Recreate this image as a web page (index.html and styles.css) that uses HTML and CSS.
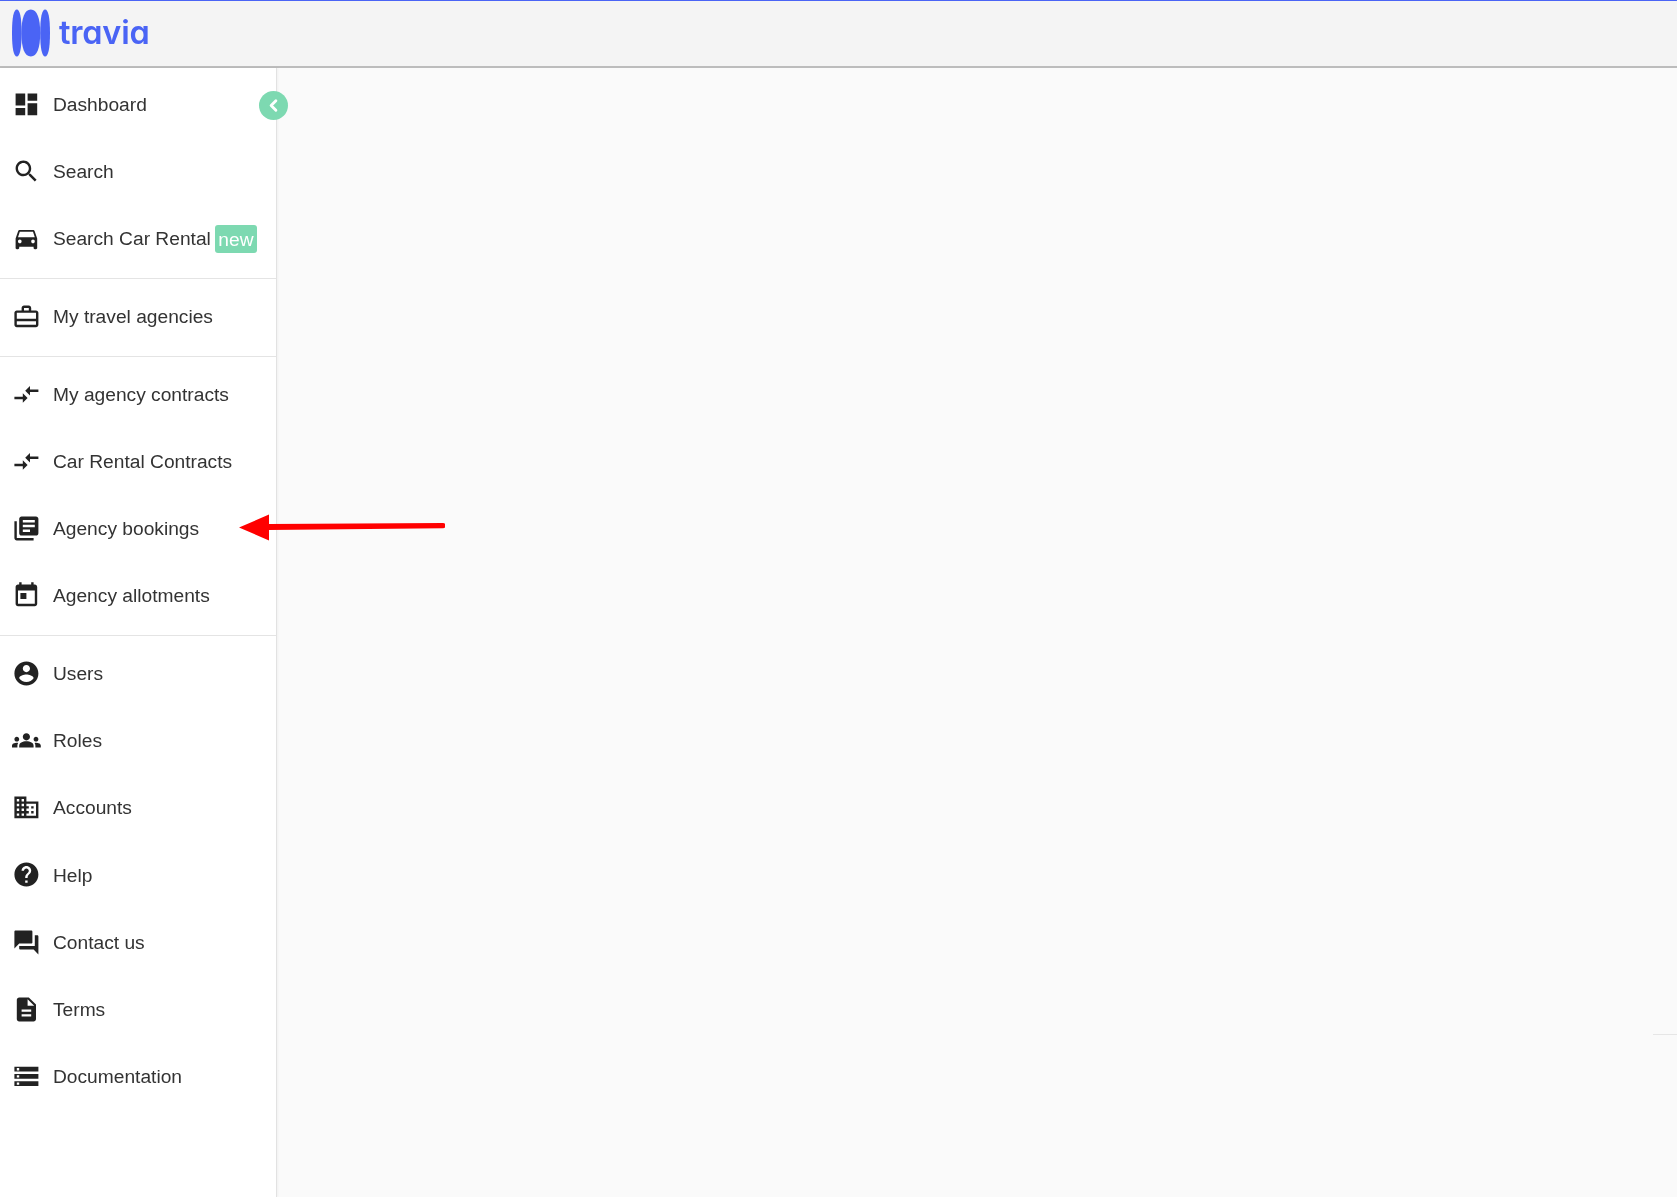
FILE: index.html
```html
<!DOCTYPE html>
<html lang="en">
<head>
<meta charset="utf-8">
<title>travia</title>
<link rel="stylesheet" href="styles.css">
</head>
<body>
<header class="topbar">
  <div class="logo">
    <svg class="logo-mark" viewBox="0 0 38 48" aria-hidden="true">
      <path d="M4.8 .5C7.8 .5 9.6 8 9.6 24S7.8 47.5 4.8 47.5 0 40 0 24 1.8 .5 4.8 .5z"/>
      <path d="M18.8 .5C25 .5 28.2 9 28.2 24S25 47.5 18.8 47.5 9.4 39 9.4 24 12.6 .5 18.8 .5z"/>
      <path d="M33.1 .5C36.1 .5 38 8 38 24S36.1 47.5 33.1 47.5 28.2 40 28.2 24 30.1 .5 33.1 .5z"/>
    </svg>
    <span class="logo-text">travia</span>
  </div>
</header>
<div class="shell">
  <nav class="sidebar">
    <div class="group">
      <a class="item"><svg class="icon" viewBox="0 0 24 24"><path d="M3 13h8V3H3v10zm0 8h8v-6H3v6zm10 0h8V11h-8v10zm0-18v6h8V3h-8z"/></svg><span>Dashboard</span></a>
      <a class="item"><svg class="icon" viewBox="0 0 24 24"><path d="M15.5 14h-.79l-.28-.27C15.41 12.59 16 11.11 16 9.5 16 5.91 13.09 3 9.5 3S3 5.91 3 9.5 5.91 16 9.5 16c1.61 0 3.09-.59 4.23-1.57l.27.28v.79l5 4.99L20.49 19l-4.99-5zm-6 0C7.01 14 5 11.99 5 9.5S7.01 5 9.5 5 14 7.01 14 9.5 11.99 14 9.5 14z"/></svg><span>Search</span></a>
      <a class="item"><svg class="icon" viewBox="0 0 24 24"><path d="M18.92 6.01C18.72 5.42 18.16 5 17.5 5h-11c-.66 0-1.21.42-1.42 1.01L3 12v8c0 .55.45 1 1 1h1c.55 0 1-.45 1-1v-1h12v1c0 .55.45 1 1 1h1c.55 0 1-.45 1-1v-8l-2.08-5.99zM6.5 16c-.83 0-1.5-.67-1.5-1.5S5.67 13 6.5 13s1.5.67 1.5 1.5S7.33 16 6.5 16zm11 0c-.83 0-1.5-.67-1.5-1.5s.67-1.5 1.5-1.5 1.5.67 1.5 1.5-.67 1.5-1.5 1.5zM5 11l1.5-4.5h11L19 11H5z"/></svg><span>Search Car Rental</span><span class="badge">new</span></a>
    </div>
    <div class="group">
      <a class="item"><svg class="icon" viewBox="0 0 24 24"><path d="M20 7h-4V5c0-1.1-.9-2-2-2h-4c-1.1 0-2 .9-2 2v2H4c-1.1 0-2 .9-2 2v10c0 1.1.9 2 2 2h16c1.1 0 2-.9 2-2V9c0-1.1-.9-2-2-2zM10 5h4v2h-4V5zm10 14H4v-3h16v3zm0-5H4V9h16v5z"/></svg><span>My travel agencies</span></a>
    </div>
    <div class="group">
      <a class="item"><svg class="icon" viewBox="0 0 24 24"><path d="M9.01 14H2v2h7.01v3L13 15l-3.99-4v3zm5.98-1v-3H22V8h-7.01V5L11 9l3.99 4z"/></svg><span>My agency contracts</span></a>
      <a class="item"><svg class="icon" viewBox="0 0 24 24"><path d="M9.01 14H2v2h7.01v3L13 15l-3.99-4v3zm5.98-1v-3H22V8h-7.01V5L11 9l3.99 4z"/></svg><span>Car Rental Contracts</span></a>
      <a class="item"><svg class="icon" viewBox="0 0 24 24"><path d="M4 6H2v14c0 1.1.9 2 2 2h14v-2H4V6zm16-4H8c-1.1 0-2 .9-2 2v12c0 1.1.9 2 2 2h12c1.1 0 2-.9 2-2V4c0-1.1-.9-2-2-2zm-1 9H9V9h10v2zm-4 4H9v-2h6v2zm4-8H9V5h10v2z"/></svg><span>Agency bookings</span></a>
      <a class="item"><svg class="icon" viewBox="0 0 24 24"><path d="M19 3h-1V1h-2v2H8V1H6v2H5c-1.11 0-2 .9-2 2v14c0 1.1.89 2 2 2h14c1.1 0 2-.9 2-2V5c0-1.1-.9-2-2-2zm0 16H5V8h14v11zM7 10h5v5H7z"/></svg><span>Agency allotments</span></a>
    </div>
    <div class="group last">
      <a class="item"><svg class="icon" viewBox="0 0 24 24"><path d="M12 2C6.48 2 2 6.48 2 12s4.48 10 10 10 10-4.48 10-10S17.52 2 12 2zm0 3c1.66 0 3 1.34 3 3s-1.34 3-3 3-3-1.34-3-3 1.34-3 3-3zm0 14.2c-2.5 0-4.71-1.28-6-3.22.03-1.99 4-3.08 6-3.08 1.99 0 5.97 1.09 6 3.08-1.29 1.94-3.5 3.22-6 3.22z"/></svg><span>Users</span></a>
      <a class="item"><svg class="icon" viewBox="0 0 24 24"><path d="M12 12.75c1.63 0 3.07.39 4.24.9 1.08.48 1.76 1.56 1.76 2.73V18H6v-1.61c0-1.18.68-2.26 1.76-2.73 1.17-.52 2.61-.91 4.24-.91zM4 13c1.1 0 2-.9 2-2s-.9-2-2-2-2 .9-2 2 .9 2 2 2zm1.13 1.1c-.37-.06-.74-.1-1.13-.1-.99 0-1.93.21-2.78.58C.48 14.9 0 15.62 0 16.43V18h4.5v-1.61c0-.83.23-1.61.63-2.29zM20 13c1.1 0 2-.9 2-2s-.9-2-2-2-2 .9-2 2 .9 2 2 2zm4 3.43c0-.81-.48-1.53-1.22-1.85-.85-.37-1.79-.58-2.78-.58-.39 0-.76.04-1.13.1.4.68.63 1.46.63 2.29V18H24v-1.57zM12 6c1.66 0 3 1.34 3 3s-1.34 3-3 3-3-1.34-3-3 1.34-3 3-3z"/></svg><span>Roles</span></a>
      <a class="item"><svg class="icon" viewBox="0 0 24 24"><path d="M12 7V3H2v18h20V7H12zM6 19H4v-2h2v2zm0-4H4v-2h2v2zm0-4H4V9h2v2zm0-4H4V5h2v2zm4 12H8v-2h2v2zm0-4H8v-2h2v2zm0-4H8V9h2v2zm0-4H8V5h2v2zm10 12h-8v-2h2v-2h-2v-2h2v-2h-2V9h8v10zm-2-8h-2v2h2v-2zm0 4h-2v2h2v-2z"/></svg><span>Accounts</span></a>
      <a class="item"><svg class="icon" viewBox="0 0 24 24"><path d="M12 2C6.48 2 2 6.48 2 12s4.48 10 10 10 10-4.48 10-10S17.52 2 12 2zm1 17h-2v-2h2v2zm2.07-7.75l-.9.92C13.45 12.9 13 13.5 13 15h-2v-.5c0-1.1.45-2.1 1.17-2.83l1.24-1.26c.37-.36.59-.86.59-1.41 0-1.1-.9-2-2-2s-2 .9-2 2H8c0-2.21 1.79-4 4-4s4 1.79 4 4c0 .88-.36 1.68-.93 2.25z"/></svg><span>Help</span></a>
      <a class="item"><svg class="icon" viewBox="0 0 24 24"><path d="M21 6h-2v9H6v2c0 .55.45 1 1 1h11l4 4V7c0-.55-.45-1-1-1zm-4 6V3c0-.55-.45-1-1-1H3c-.55 0-1 .45-1 1v14l4-4h10c.55 0 1-.45 1-1z"/></svg><span>Contact us</span></a>
      <a class="item"><svg class="icon" viewBox="0 0 24 24"><path d="M14 2H6c-1.1 0-1.99.9-1.99 2L4 20c0 1.1.89 2 1.99 2H18c1.1 0 2-.9 2-2V8l-6-6zm2 16H8v-2h8v2zm0-4H8v-2h8v2zm-3-5V3.5L18.5 9H13z"/></svg><span>Terms</span></a>
      <a class="item"><svg class="icon" viewBox="0 0 24 24"><path d="M2 20h20v-4H2v4zm2-3h2v2H4v-2zM2 4v4h20V4H2zm4 3H4V5h2v2zm-4 7h20v-4H2v4zm2-3h2v2H4v-2z"/></svg><span>Documentation</span></a>
    </div>
    <button class="collapse" type="button" aria-label="Collapse">
      <svg viewBox="0 0 24 24"><path d="M15 6 9 12l6 6" fill="none" stroke="#fff" stroke-width="3.6" stroke-linecap="round" stroke-linejoin="round"/></svg>
    </button>
  </nav>
  <main class="content"><div class="tick"></div></main>
</div>
<svg class="arrow" viewBox="0 0 207 27" aria-hidden="true">
  <path d="M31 10 205 9a2.6 2.6 0 0 1 0 5.2L31 16V26.5L1 13.5 31 .5z" fill="#ff0000"/>
</svg>
</body>
</html>
```

FILE: styles.css
```css
* { box-sizing: border-box; }
html, body { height: 100%; }
body {
  margin: 0;
  overflow: hidden;
  display: flex;
  flex-direction: column;
  position: relative;
  background: #fafafa;
  font-family: "Liberation Sans", Arial, sans-serif;
  color: #333;
}
.topbar {
  height: 68px;
  flex: none;
  background: #f4f4f4;
  border-top: 1px solid #4a64f5;
  border-bottom: 2px solid #bcbcbc;
  padding: 8px 0 0 12px;
}
.logo { display: flex; align-items: center; gap: 9px; height: 48px; filter: blur(.45px); }
.logo-mark { width: 38px; height: 48px; fill: #4a64f5; flex: none; }
.logo-text {
  font-family: Inter, Roboto, sans-serif;
  font-feature-settings: "cv11";
  font-size: 32.5px;
  font-weight: 600;
  letter-spacing: -.2px;
  color: #4a64f5;
  line-height: 44px;
}
.shell { flex: 1; display: flex; min-height: 0; }
.sidebar {
  position: relative;
  width: 277px;
  flex: none;
  background: #fff;
  border-right: 1px solid #e2e2e2;
  box-shadow: 1px 0 2px rgba(0,0,0,.04);
  padding-top: 3.4px;
}
.group { padding: 0 0 5.5px; border-bottom: 1px solid #e4e4e4; margin-bottom: 4.15px; }
.group.last { border-bottom: 0; }
.item {
  display: flex;
  align-items: center;
  height: 67.17px;
  padding-left: 12px;
  font-size: 19.2px;
  white-space: nowrap;
  filter: blur(.45px);
}
.icon { width: 28.8px; height: 28.8px; flex: none; fill: #222; margin: 0 12.2px 1.5px 0; }
.badge {
  margin-left: 4.5px;
  height: 28px;
  padding: 0 3px;
  background: #7dd9b1;
  color: #fff;
  border-radius: 3px;
  font-size: 19.2px;
  line-height: 30px;
}
.collapse {
  position: absolute;
  top: 23px;
  left: 259px;
  width: 29px;
  height: 29px;
  padding: 5px;
  border: 0;
  border-radius: 50%;
  background: #7dd9b1;
}
.collapse svg { display: block; width: 19px; height: 19px; }
.content { flex: 1; position: relative; }
.tick {
  position: absolute;
  right: 0;
  top: 966px;
  width: 24px;
  height: 1px;
  background: #e6e6e6;
}
.arrow { position: absolute; left: 238px; top: 514px; width: 207px; height: 27px; }
```
